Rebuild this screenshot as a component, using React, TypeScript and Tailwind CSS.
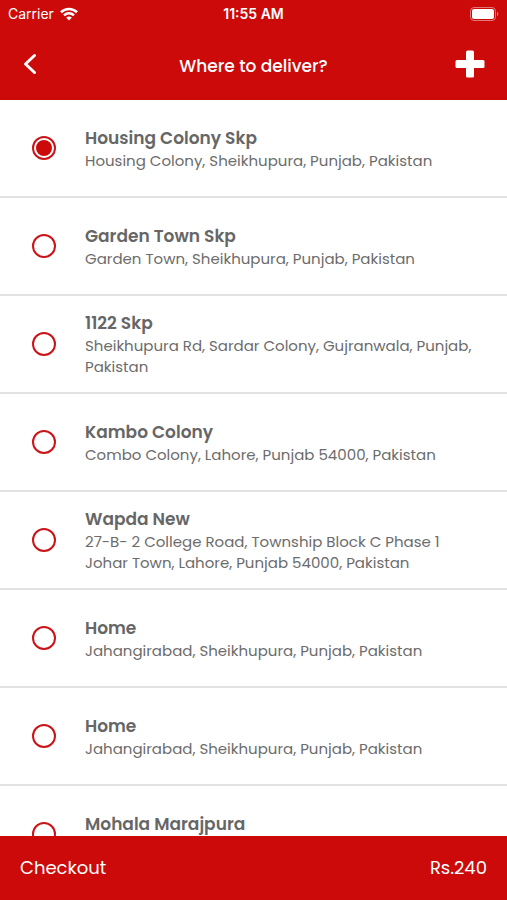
import { useState } from "react";

type Address = { id: number; title: string; detail: string };

const addresses: Address[] = [
  { id: 1, title: "Housing Colony Skp", detail: "Housing Colony, Sheikhupura, Punjab, Pakistan" },
  { id: 2, title: "Garden Town Skp", detail: "Garden Town, Sheikhupura, Punjab, Pakistan" },
  { id: 3, title: "1122 Skp", detail: "Sheikhupura Rd, Sardar Colony, Gujranwala, Punjab, Pakistan" },
  { id: 4, title: "Kambo Colony", detail: "Combo Colony, Lahore, Punjab 54000, Pakistan" },
  { id: 5, title: "Wapda New", detail: "27-B- 2 College Road, Township Block C Phase 1 Johar Town, Lahore, Punjab 54000, Pakistan" },
  { id: 6, title: "Home", detail: "Jahangirabad, Sheikhupura, Punjab, Pakistan" },
  { id: 7, title: "Home", detail: "Jahangirabad, Sheikhupura, Punjab, Pakistan" },
  { id: 8, title: "Mohala Marajpura", detail: "" },
];

function StatusBar() {
  return (
    <div className="grid h-7 grid-cols-3 items-center px-2 font-['Inter',sans-serif] text-sm">
      <div className="flex items-center gap-1.5">
        <span>Carrier</span>
        <svg className="h-4 w-[18px]" viewBox="0 0 18 16" fill="none" stroke="currentColor" strokeWidth="2.6" aria-hidden="true">
          <path d="M1 6.2C5.5 1.9 12.5 1.9 17 6.2" />
          <path d="M4 9.4C6.9 6.7 11.1 6.7 14 9.4" />
          <path d="M9 14.5L6.2 11.7C7.8 10.2 10.2 10.2 11.8 11.7Z" fill="currentColor" stroke="none" />
        </svg>
      </div>
      <span className="text-center font-semibold">11:55 AM</span>
      <svg className="h-[14px] w-[29px] justify-self-end" viewBox="0 0 29 14" aria-hidden="true">
        <rect x="0.5" y="0.5" width="25" height="13" rx="3.5" fill="none" stroke="#fff" strokeOpacity="0.45" />
        <rect x="2" y="2" width="22" height="10" rx="2" fill="#fff" />
        <path d="M27 4.8C28.8 5.5 28.8 8.5 27 9.2Z" fill="#fff" fillOpacity="0.5" />
      </svg>
    </div>
  );
}

export default function App() {
  const [selected, setSelected] = useState(1);

  return (
    <div className="flex h-screen flex-col bg-white font-['Poppins','Inter',sans-serif] text-[#666]">
      <header className="shrink-0 bg-[#cc0a0a] text-white">
        <StatusBar />
        <div className="flex h-[72px] items-center justify-between px-5">
          <button type="button" aria-label="Back" className="flex w-8 justify-start">
            <svg className="h-6 w-5" viewBox="0 0 20 24" fill="none" stroke="currentColor" strokeWidth="3" strokeLinecap="round" strokeLinejoin="round" aria-hidden="true">
              <path d="M14.5 3.5L5.5 12L14.5 20.500" />
            </svg>
          </button>
          <h1 className="pt-1 text-[17px] leading-6 font-medium">Where to deliver?</h1>
          <button type="button" aria-label="Add address" className="flex w-8 justify-start">
            <svg className="h-7 w-[30px]" viewBox="0 0 30 28" fill="currentColor" aria-hidden="true">
              <rect x="11" y="0.5" width="8" height="27" rx="1.5" />
              <rect x="0.5" y="10" width="29" height="8" rx="1.5" />
            </svg>
          </button>
        </div>
      </header>

      <main className="min-h-0 flex-1 overflow-y-auto [scrollbar-width:none]">
        {addresses.map((a) => (
          <label
            key={a.id}
            className="flex min-h-[98px] cursor-pointer items-center gap-[29px] border-b-2 border-[#e2e2e2] pr-7 pl-8"
          >
            <input
              type="radio"
              name="address"
              checked={selected === a.id}
              onChange={() => setSelected(a.id)}
              className="size-6 shrink-0 appearance-none rounded-full border-2 border-[#cc1418] bg-white bg-clip-content p-[2px] checked:bg-[#cc0a0a]"
            />
            <span className="block min-w-0 flex-1">
              <span className="block text-[17px] leading-6 font-semibold">{a.title}</span>
              <span className="block min-h-[21px] text-[15px] leading-[21px] text-[#6c6c6c]">{a.detail}</span>
            </span>
          </label>
        ))}
      </main>

      <footer className="shrink-0 bg-[#cc0a0a] text-white">
        <button type="button" className="flex h-16 w-full items-center justify-between px-5 text-lg">
          <span>Checkout</span>
          <span>Rs.240</span>
        </button>
      </footer>
    </div>
  );
}
